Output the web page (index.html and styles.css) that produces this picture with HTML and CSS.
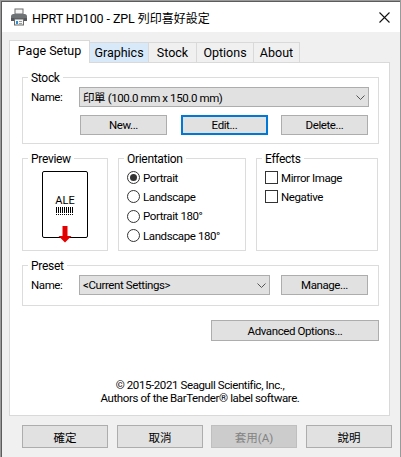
FILE: index.html
```html
<!DOCTYPE html>
<html lang="zh-Hant">
<head>
<meta charset="utf-8">
<title>HPRT HD100 - ZPL 列印喜好設定</title>
<link rel="stylesheet" href="styles.css">
</head>
<body>
<div class="window">
  <header class="titlebar">
    <svg class="printer" width="18" height="18" viewBox="0 0 18 18">
      <rect x="5" y="1" width="8" height="5" fill="#f4f4f4" stroke="#6d6d6d"/>
      <path d="M1 8.5 Q1 6 3.5 6 H14.5 Q17 6 17 8.5 V13 H1 Z" fill="#6f7275"/>
      <rect x="1" y="10" width="16" height="3" fill="#53565a"/>
      <rect x="4.5" y="11" width="9" height="6" fill="#f6f6f6" stroke="#6b6b6b"/>
      <rect x="6" y="13" width="2" height="3" fill="#2f8fd0"/>
      <rect x="9" y="13" width="3" height="1" fill="#9a9a9a"/>
      <rect x="9" y="15" width="3" height="1" fill="#9a9a9a"/>
    </svg>
    <span class="title">HPRT HD100 - ZPL <span class="title-cjk">列印喜好設定</span></span>
    <svg class="close" width="11" height="11" viewBox="0 0 11 11">
      <path d="M0.5 0.5 L10.5 10.5 M10.5 0.5 L0.5 10.5" stroke="#111" stroke-width="1.1" fill="none"/>
    </svg>
  </header>
  <div class="client">
    <nav class="tabs">
      <span class="tab tab-active">Page Setup</span>
      <span class="tab tab-hover tab-graphics">Graphics</span>
      <span class="tab tab-stock">Stock</span>
      <span class="tab tab-options">Options</span>
      <span class="tab tab-about">About</span>
    </nav>
    <main class="page">
      <fieldset class="group group-stock">
        <legend>Stock</legend>
        <div class="row">
          <span class="name">Name:</span>
          <div class="select select-wide"><span>印單 (100.0 mm x 150.0 mm)</span><svg class="chevron" width="9" height="5" viewBox="0 0 9 5"><path d="M0.5 0.5 L4.500 4.500 L8.500 0.5" fill="none" stroke="#555" stroke-width="1"/></svg></div>
        </div>
        <div class="actions">
          <button class="btn btn-87">New...</button>
          <button class="btn btn-87 btn-focus">Edit...</button>
          <button class="btn btn-87">Delete...</button>
        </div>
      </fieldset>
      <div class="columns">
        <fieldset class="group group-preview">
          <legend>Preview</legend>
          <svg class="label" width="52" height="76" viewBox="0 0 52 76">
            <rect x="0.5" y="0.5" width="45" height="66" rx="1.5" fill="#fff" stroke="#000"/>
            <text class="ale" x="23" y="33" text-anchor="middle">ALE</text>
            <path d="M14.500 36 v6 M16.500 36 v6 M18.500 36 v6 M20.500 36 v6 M22.500 36 v6 M24.500 36 v6 M26.500 36 v6 M28.500 36 v6 M30.500 36 v6" stroke="#000" stroke-width="1" fill="none"/>
            <path d="M14 43.500 H32" stroke="#000" stroke-width="1" stroke-dasharray="1 1" fill="none"/>
            <path d="M20.500 55 H25.500 V65 H29.500 L23 71.500 L16.500 65 H20.500 Z" fill="#e30000"/>
          </svg>
        </fieldset>
        <fieldset class="group group-orient">
          <legend>Orientation</legend>
          <label class="opt"><span class="radio radio-on"></span>Portrait</label>
          <label class="opt"><span class="radio"></span>Landscape</label>
          <label class="opt"><span class="radio"></span>Portrait 180°</label>
          <label class="opt"><span class="radio"></span>Landscape 180°</label>
        </fieldset>
        <fieldset class="group group-effects">
          <legend>Effects</legend>
          <label class="opt"><span class="check"></span>Mirror Image</label>
          <label class="opt"><span class="check"></span>Negative</label>
        </fieldset>
      </div>
      <fieldset class="group group-preset">
        <legend>Preset</legend>
        <div class="row">
          <span class="name">Name:</span>
          <div class="select select-mid"><span>&lt;Current Settings&gt;</span><svg class="chevron" width="9" height="5" viewBox="0 0 9 5"><path d="M0.5 0.5 L4.500 4.500 L8.500 0.5" fill="none" stroke="#555" stroke-width="1"/></svg></div>
          <button class="btn btn-87 btn-manage">Manage...</button>
        </div>
      </fieldset>
      <div class="advanced"><button class="btn btn-adv">Advanced Options...</button></div>
      <p class="copy">© 2015-2021 Seagull Scientific, Inc.,<br>Authors of the BarTender® label software.</p>
    </main>
    <footer class="footer">
      <button class="btn btn-foot">確定</button>
      <button class="btn btn-foot">取消</button>
      <button class="btn btn-foot btn-disabled">套用(A)</button>
      <button class="btn btn-foot btn-help">說明</button>
    </footer>
  </div>
</div>
</body>
</html>
```
FILE: styles.css
```css
* { box-sizing: border-box; }
html, body { margin: 0; padding: 0; height: 100%; overflow: hidden; }
body {
  background: #9a9a9a;
  font-family: Roboto, "Noto Sans CJK TC", sans-serif;
  font-size: 11.500px;
  letter-spacing: -0.4px;
  color: #000;
  padding: 1px 1px 0 1px;
}
.window {
  width: 399px;
  height: 456px;
  border-left: 1px solid #5c5c5c;
  border-top: 1px solid #5c5c5c;
  background: #f0f0f0;
  display: flex;
  flex-direction: column;
}
.titlebar {
  height: 30px;
  flex: none;
  background: #fff;
  display: flex;
  align-items: center;
  padding: 0 10px 0 8px;
}
.printer { flex: none; }
.title {
  margin-left: 4px;
  font-size: 12.500px;
  letter-spacing: -0.1px;
  flex: 1;
  white-space: nowrap;
}
.title-cjk { font-size: 12px; letter-spacing: 0; }
.close { flex: none; }
.client { flex: 1; padding: 8px 0 0 7px; }
.tabs { display: flex; align-items: flex-end; height: 23px; position: relative; z-index: 1; margin-bottom: -1px; }
.tab {
  height: 20px;
  border: 1px solid #d9d9d9;
  border-bottom: 0;
  margin-left: -1px;
  margin-bottom: 1px;
  background: #f0f0f0;
  display: flex;
  align-items: center;
  justify-content: center;
  font-size: 12.500px;
  letter-spacing: 0;
}
.tab-active {
  margin-left: 0;
  margin-bottom: 0;
  height: 23px;
  width: 81px;
  background: #fff;
  padding-bottom: 4px;
}
.tab-hover { background: #d8eaf9; }
.tab-graphics { width: 60px; }
.tab-stock { width: 49px; }
.tab-options { width: 58px; }
.tab-about { width: 47px; }
.page {
  width: 381px;
  height: 354px;
  background: #fff;
  border: 1px solid #d9d9d9;
  padding: 6px 10px 0 12px;
}
.group {
  margin: 0;
  padding: 0;
  min-width: 0;
  border: 1px solid #dcdcdc;
}
.group legend { padding: 0 3px; margin-left: -3px; height: 16px; line-height: 18px; font-size: 12px; letter-spacing: -0.3px; }
.group-stock { height: 75px; padding: 2px 8px 0 8px; }
.group-preset { height: 49px; margin-top: 6px; padding: 2px 8px 0 8px; }
.row { display: flex; align-items: center; height: 20px; }
.name { width: 48px; flex: none; }
.select {
  height: 20px;
  background: #e1e1e1;
  border: 1px solid #adadad;
  display: flex;
  align-items: center;
  justify-content: space-between;
  padding: 0 3px 0 3px;
  white-space: nowrap;
}
.select-wide { width: 290px; }
.select-mid { width: 191px; }
.chevron { flex: none; }
.actions { display: flex; margin: 8px 0 0 49px; gap: 14px; }
.actions .btn + .btn + .btn { margin-left: -1px; }
.btn {
  font: inherit;
  letter-spacing: inherit;
  color: #000;
  height: 20px;
  padding: 0;
  background: #e1e1e1;
  border: 1px solid #adadad;
  border-radius: 0;
}
.btn-87 { width: 87px; }
.btn-focus { border: 2px solid #0078d7; }
.btn-manage { margin-left: 11px; }
.btn-adv { width: 168px; height: 21px; }
.btn-foot { width: 86px; height: 23px; letter-spacing: 0; }
.btn-disabled { background: #cccccc; border-color: #bfbfbf; color: #838383; margin-left: -1px; }
.columns { display: flex; margin-top: 6px; }
.group-preview { width: 86px; height: 101px; padding: 5px 0 0 19px; }
.group-preview legend { margin-left: -14px; }
.group-orient { width: 128px; height: 101px; margin-left: 10px; padding: 2px 0 0 8px; }
.group-effects { width: 122px; height: 101px; margin-left: 10px; padding: 2px 0 0 8px; }
.label { display: block; }
.ale { font-family: Roboto, sans-serif; font-size: 11px; letter-spacing: 0; }
.opt { display: flex; align-items: center; height: 19.3px; white-space: nowrap; }
.radio {
  width: 13px;
  height: 13px;
  border: 1px solid #333;
  border-radius: 50%;
  margin-right: 3px;
  flex: none;
  display: flex;
  align-items: center;
  justify-content: center;
  background: #fff;
}
.radio-on::after { content: ""; width: 7px; height: 7px; border-radius: 50%; background: #333; }
.check {
  width: 13px;
  height: 13px;
  border: 1px solid #333;
  margin-right: 3px;
  flex: none;
  background: #fff;
}
.advanced { display: flex; justify-content: flex-end; margin-top: 14px; }
.copy { margin: 38px 0 0; text-align: center; line-height: 13px; width: 356px; }
.footer { display: flex; gap: 9px; margin: 9px 0 0 13px; }
```
